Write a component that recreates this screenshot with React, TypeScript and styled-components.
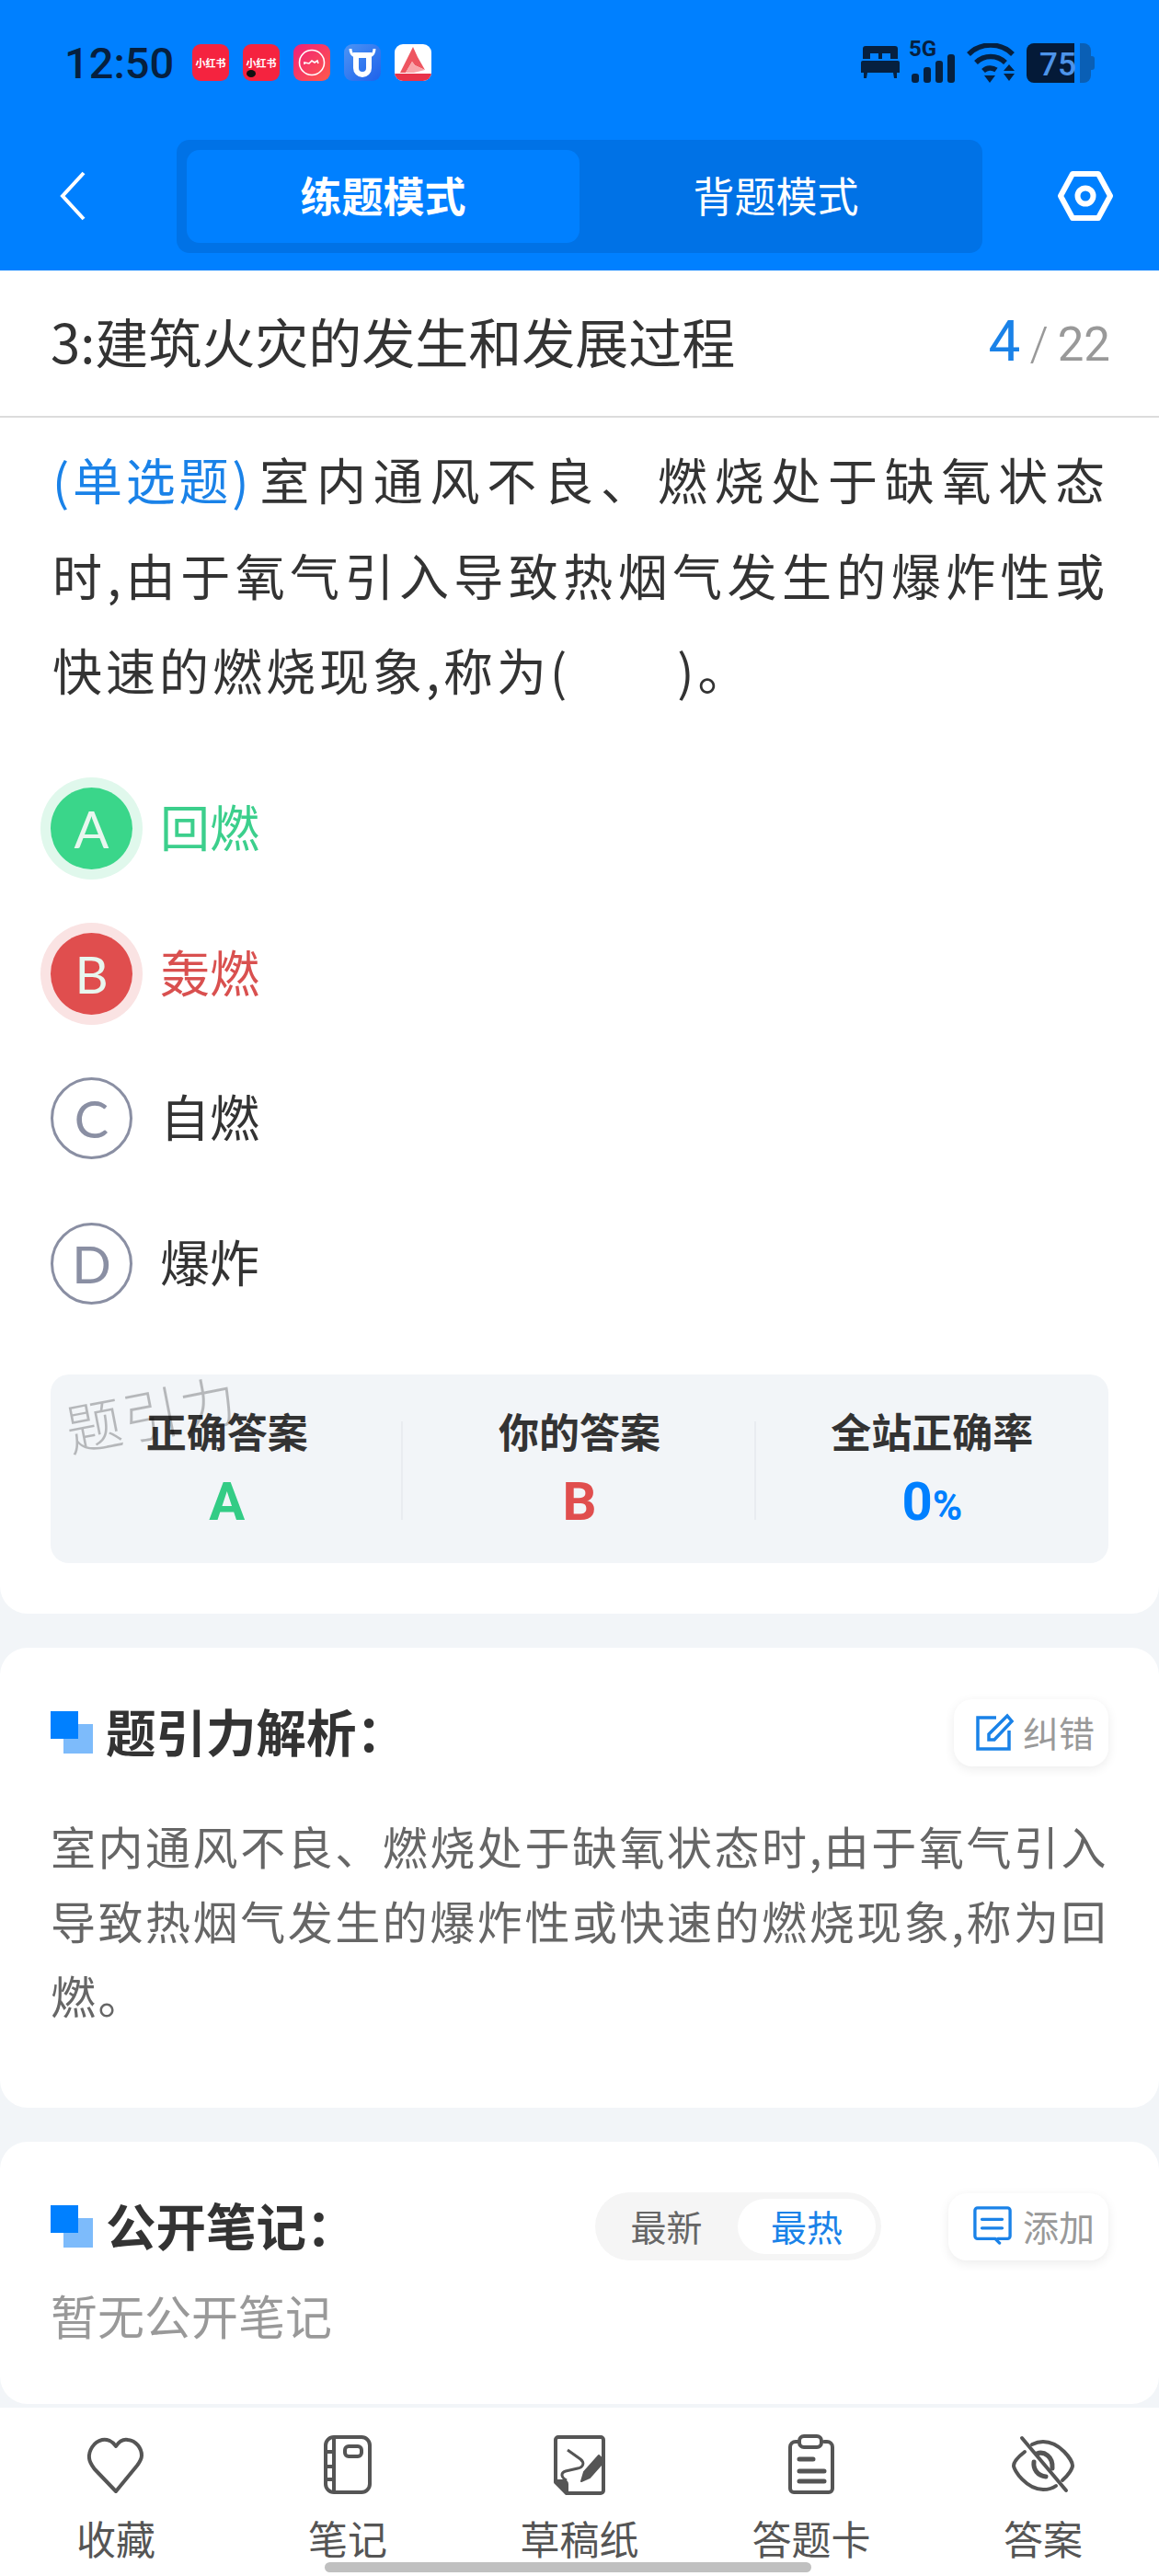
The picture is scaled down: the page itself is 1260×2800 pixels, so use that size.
import styled, { createGlobalStyle } from "styled-components";

const GlobalStyle = createGlobalStyle`
  html, body {
    margin: 0;
    padding: 0;
    background: #f2f5f8;
    font-family: "Noto Sans CJK SC", "Noto Sans", sans-serif;
  }
  * { box-sizing: border-box; }
`;

const Page = styled.div`
  position: relative;
  width: 1260px;
  height: 2800px;
  overflow: hidden;
  display: flex;
  flex-direction: column;
  background: #f2f5f8;
`;

const Header = styled.header`
  height: 294px;
  background: #0080ff;
`;

const StatusBar = styled.div`
  height: 136px;
  padding: 0 70px 0 70px;
  display: flex;
  align-items: center;
  color: #06203f;
`;

const Clock = styled.span`
  font-family: Roboto, sans-serif;
  font-size: 47px;
  font-weight: 500;
  width: 139px;
`;

const AppIcons = styled.div`
  display: flex;
  gap: 15px;
  flex: 1;
`;

const AppIcon = styled.div<{ $bg: string }>`
  width: 40px;
  height: 40px;
  border-radius: 9px;
  background: ${(p) => p.$bg};
  color: #fff;
  font-size: 11px;
  font-weight: 700;
  display: flex;
  align-items: center;
  justify-content: center;
  overflow: hidden;
  position: relative;
  white-space: nowrap;
`;

const AppDot = styled.i`
  position: absolute;
  left: 4px;
  bottom: 4px;
  width: 10px;
  height: 8px;
  border-radius: 50%;
  background: #111;
`;

const StatusIcons = styled.div`
  display: flex;
  align-items: center;
`;

const NavBar = styled.div`
  height: 154px;
  padding: 0 0 0 64px;
  display: flex;
  align-items: center;
`;

const TabSwitch = styled.div`
  margin-left: 98px;
  width: 876px;
  height: 123px;
  padding: 11px;
  border-radius: 14px;
  background: #0072e6;
  display: flex;
`;

const TabItem = styled.div<{ $active?: boolean }>`
  flex: 1;
  padding-bottom: 3px;
  display: flex;
  align-items: center;
  justify-content: center;
  border-radius: 14px;
  color: #fff;
  font-size: 45px;
  font-weight: ${(p) => (p.$active ? 700 : 400)};
  background: ${(p) => (p.$active ? "#0080ff" : "transparent")};
`;

const SettingsBtn = styled.div`
  margin-left: 82px;
  display: flex;
`;

const QuestionCard = styled.section`
  position: relative;
  height: 1460px;
  background: #fff;
  border-radius: 0 0 30px 30px;
`;

const TitleRow = styled.div`
  height: 160px;
  padding: 0 53px 6px 55px;
  border-bottom: 2px solid #dcdcdc;
  display: flex;
  align-items: center;
  justify-content: space-between;
`;

const ChapterTitle = styled.h1`
  margin: 0;
  font-size: 58px;
  font-weight: 400;
  color: #333;
`;

const Counter = styled.div`
  display: flex;
  align-items: baseline;
  color: #999;
  font-size: 51px;
  font-family: Roboto, sans-serif;
`;

const CounterNow = styled.span`
  font-size: 62px;
  color: #1a82e8;
`;

const CounterSep = styled.span`
  margin: 0 10px;
  font-weight: 300;
`;

const QuestionText = styled.p`
  margin: 0;
  padding: 15px 55px 0 57px;
  font-size: 54px;
  line-height: 103.5px;
  letter-spacing: 4px;
  text-align: justify;
  color: #333;
`;

const QuestionType = styled.span`
  margin-right: 8px;
  letter-spacing: 0;
  color: #1a82e8;
`;

const OptionList = styled.div`
  margin-top: 42px;
  padding-left: 55px;
`;

const OptionRow = styled.div`
  height: 157.7px;
  display: flex;
  align-items: center;
  gap: 30px;
`;

const optionBg = { right: "#3ad68a", wrong: "#e04e4e", none: "#fff" };
const optionRing = { right: "#e0f8ec", wrong: "#fae3e3", none: "transparent" };
const optionText = { right: "#3ccf8c", wrong: "#d9504f", none: "#333" };

type OptionState = "right" | "wrong" | "none";

const OptionBadge = styled.div<{ $state: OptionState }>`
  width: 89px;
  height: 89px;
  border-radius: 50%;
  display: flex;
  align-items: center;
  justify-content: center;
  font-family: Lato, sans-serif;
  font-size: 56px;
  font-weight: 400;
  background: ${(p) => optionBg[p.$state]};
  color: ${(p) => (p.$state === "none" ? "#8a8fa3" : "#e8f7ef")};
  border: ${(p) => (p.$state === "none" ? "3px solid #8a8fa3" : "none")};
  box-shadow: 0 0 0 11px ${(p) => optionRing[p.$state]};
`;

const OptionLabel = styled.span<{ $state: OptionState }>`
  padding-bottom: 6px;
  font-size: 54px;
  color: ${(p) => optionText[p.$state]};
`;

const StatsBox = styled.div`
  margin: 42px 55px 0;
  height: 205px;
  border-radius: 20px;
  background: #f2f5f8;
  display: grid;
  grid-template-columns: repeat(3, 1fr);
  align-items: center;
`;

const StatCell = styled.div<{ $divider?: boolean }>`
  position: relative;
  padding-bottom: 4px;
  text-align: center;
  &::after {
    content: "";
    display: ${(p) => (p.$divider ? "block" : "none")};
    position: absolute;
    right: 0;
    top: 20px;
    bottom: 16px;
    width: 2px;
    background: #e9ecf0;
  }
`;

const StatLabel = styled.div`
  font-size: 44px;
  font-weight: 700;
  line-height: 60px;
  color: #333;
`;

const StatValue = styled.div<{ $color: string }>`
  margin-top: 15px;
  height: 64px;
  font-family: Roboto, sans-serif;
  font-size: 58px;
  font-weight: 700;
  line-height: 64px;
  color: ${(p) => p.$color};
  small {
    font-size: 44px;
    line-height: 0;
  }
`;

const Watermark = styled.div`
  position: absolute;
  left: 70px;
  top: 1490px;
  font-size: 61px;
  font-weight: 300;
  letter-spacing: 2px;
  color: rgba(0, 0, 0, 0.25);
  transform: rotate(-11deg);
  pointer-events: none;
`;

const Card = styled.section<{ $top: number; $height: number }>`
  margin-top: ${(p) => p.$top}px;
  height: ${(p) => p.$height}px;
  padding: 55px 55px 0;
  background: #fff;
  border-radius: 30px;
`;

const CardHead = styled.div`
  height: 74px;
  display: flex;
  align-items: center;
  gap: 14px;
`;

const SquareMark = styled.div`
  position: relative;
  width: 46px;
  height: 46px;
  flex: none;
  &::before {
    content: "";
    position: absolute;
    right: 0;
    bottom: 0;
    width: 32px;
    height: 32px;
    background: #7dbbfb;
  }
  &::after {
    content: "";
    position: absolute;
    left: 0;
    top: 0;
    width: 30px;
    height: 30px;
    background: #0080ff;
  }
`;

const CardTitle = styled.h2`
  margin: 0;
  padding-bottom: 6px;
  flex: 1;
  font-size: 54.5px;
  font-weight: 700;
  color: #333;
  white-space: nowrap;
`;

const ActionBtn = styled.div<{ $wide?: boolean }>`
  height: 73px;
  padding: 0 15px 3px ${(p) => (p.$wide ? 27 : 24)}px;
  border-radius: 20px;
  background: #fff;
  box-shadow: 0 3px 12px rgba(0, 0, 0, 0.08);
  display: flex;
  align-items: center;
  gap: ${(p) => (p.$wide ? 12 : 9)}px;
  color: #999;
  font-size: 39px;
  flex: none;
`;

const SortSwitch = styled.div`
  width: 311px;
  height: 74px;
  margin-right: 59px;
  padding: 7px 6px 7px 0;
  border-radius: 37px;
  background: #f5f5f5;
  display: flex;
  flex: none;
`;

const SortItem = styled.div<{ $active?: boolean }>`
  flex: ${(p) => (p.$active ? "0 0 150px" : "1")};
  padding-bottom: 2px;
  border-radius: 30px;
  display: flex;
  align-items: center;
  justify-content: center;
  font-size: 39px;
  background: ${(p) => (p.$active ? "#fff" : "transparent")};
  color: ${(p) => (p.$active ? "#1a82e8" : "#666")};
`;

const Analysis = styled.p`
  margin: 45px 0 0;
  font-size: 49px;
  line-height: 81px;
  letter-spacing: 2.5px;
  text-align: justify;
  color: #666;
`;

const EmptyNote = styled.p`
  margin: 24px 0 0;
  font-size: 51px;
  line-height: 70px;
  color: #999;
`;

const TabBar = styled.nav`
  margin-top: 4px;
  flex: 1;
  background: #fff;
  padding-top: 28px;
  display: grid;
  grid-template-columns: repeat(5, 1fr);
  align-items: start;
`;

const BarItem = styled.div`
  display: flex;
  flex-direction: column;
  align-items: center;
  gap: 15px;
  color: #555;
  font-size: 43px;
  line-height: 60px;
`;

const HomeIndicator = styled.div`
  position: absolute;
  left: 353px;
  bottom: 4px;
  width: 529px;
  height: 11px;
  border-radius: 6px;
  background: #c0c0c0;
`;

const BedIcon = () => (
  <svg width="42" height="36" viewBox="0 0 42 36" fill="#06203f">
    <path d="M5 0h32a3 3 0 0 1 3 3v11h-8V8H23v6h-4V8H10v6H2V3a3 3 0 0 1 3-3z" />
    <path d="M2 16h38a2 2 0 0 1 2 2v11h-3v6h-3l-1-6H7l-1 6H3v-6H0V18a2 2 0 0 1 2-2z" />
  </svg>
);

const SignalIcon = () => (
  <svg width="54" height="52" viewBox="-4 -8 54 52" fill="#06203f" style={{ marginTop: -8 }}>
    <text x="0" y="15" fontSize="24" fontWeight="700" fontFamily="Roboto, sans-serif">5G</text>
    <rect x="3" y="34" width="8" height="10" rx="3" />
    <rect x="16" y="27" width="8" height="17" rx="3" />
    <rect x="29" y="20" width="8" height="24" rx="3" />
    <rect x="42" y="13" width="8" height="31" rx="3" />
  </svg>
);

const WifiIcon = () => (
  <svg width="52" height="43" viewBox="0 0 52 43" fill="none" style={{ marginLeft: 13 }}>
    <path d="M2 12a34 34 0 0 1 48 0" stroke="#06203f" strokeWidth="5.5" />
    <path d="M10 21a23 23 0 0 1 32 0" stroke="#06203f" strokeWidth="5.5" />
    <path d="M18 30a11 11 0 0 1 14-1" stroke="#06203f" strokeWidth="5.5" />
    <path d="M19 35h12l-6 8z" fill="#06203f" />
    <path d="M40 30l6-7 6 7zM40 33h12l-6 8z" fill="#06203f" />
  </svg>
);

const BatteryIcon = () => (
  <svg width="74" height="43" viewBox="0 0 74 43" style={{ marginLeft: 13 }}>
    <path d="M62 0h-4v43h4a8 8 0 0 0 8-8V8a8 8 0 0 0-8-8z" fill="#0a5fb5" />
    <path d="M70 14h1a3 3 0 0 1 3 3v9a3 3 0 0 1-3 3h-1z" fill="#0a5fb5" />
    <path d="M8 0h44v43H8a8 8 0 0 1-8-8V8a8 8 0 0 1 8-8z" fill="#041a38" />
    <text x="14" y="35" fontSize="35" fontWeight="500" fontFamily="Roboto, sans-serif" fill="#4d94ea">75</text>
  </svg>
);

const BackIcon = () => (
  <svg width="30" height="56" viewBox="0 0 30 56" fill="none">
    <path d="M27 3L4 28l23 25" stroke="#fff" strokeWidth="4" />
  </svg>
);

const SettingsIcon = () => (
  <svg width="60" height="56" viewBox="0 0 60 56" fill="none" stroke="#fff">
    <path d="M16 4h28l13 24-13 24H16L3 28z" strokeWidth="6" strokeLinejoin="round" />
    <circle cx="30" cy="28" r="8.5" strokeWidth="6" />
  </svg>
);

const EditIcon = () => (
  <svg width="42" height="42" viewBox="0 0 42 42" fill="none" stroke="#1a82e8" strokeWidth="3.5">
    <path d="M22 6H2v34h34V20" />
    <path d="M14 24l0 6 6 0L39 10l-5-6z" />
  </svg>
);

const CommentIcon = () => (
  <svg width="42" height="42" viewBox="0 0 44 44" fill="none" stroke="#1a82e8" strokeWidth="3.5">
    <path d="M28 37h11a3 3 0 0 0 3-3V5a3 3 0 0 0-3-3H5a3 3 0 0 0-3 3v29a3 3 0 0 0 3 3h20l5 5" strokeLinecap="round" />
    <path d="M10 15h23M10 25h23" strokeLinecap="round" />
  </svg>
);

const HeartIcon = () => (
  <svg width="68" height="68" viewBox="0 0 68 68" fill="none" stroke="#555" strokeWidth="4" strokeLinejoin="round">
    <path d="M34 14C30 8 24 6 19 7 10 9 4 19 5 27c.5 5 3 8 6 12l23 24 23-28c3-4 5-7 5-11 0-8-6-16-15-17-5-1-9 1-13 7z" />
  </svg>
);

const NotebookIcon = () => (
  <svg width="68" height="68" viewBox="0 0 68 68" fill="none" stroke="#555" strokeWidth="4">
    <rect x="10" y="4" width="48" height="60" rx="9" />
    <path d="M19 4v60M10 20h9M10 36h9M10 50h9" />
    <rect x="31" y="14" width="18" height="11" rx="4" />
  </svg>
);

const DraftIcon = () => (
  <svg width="68" height="68" viewBox="0 0 68 68" fill="none" stroke="#555" strokeWidth="4" strokeLinejoin="round">
    <path d="M20 65h37a3 3 0 0 0 3-3V7a3 3 0 0 0-3-3H11a3 3 0 0 0-3 3v46z" />
    <path d="M8 52h9a3 3 0 0 1 3 3v10z" fill="#555" />
    <path d="M21 18l14 10c5 4 3 9-3 10l-13 3c-6 2-5 7 1 10" strokeWidth="3" />
    <path d="M36 52l3-10 16-18 6 6-16 18z" fill="#555" strokeWidth="2" />
  </svg>
);

const ClipboardIcon = () => (
  <svg width="68" height="68" viewBox="0 0 68 68" fill="none" stroke="#555" strokeWidth="4" strokeLinecap="round">
    <path d="M20 9h-3a6 6 0 0 0-6 6v45a4 4 0 0 0 4 4h38a4 4 0 0 0 4-4V15a6 6 0 0 0-6-6h-3" />
    <rect x="21" y="3" width="24" height="12" rx="5" />
    <path d="M24 28h15M24 41h27M24 52h27" strokeWidth="5" transform="translate(-3 0)" />
  </svg>
);

const EyeOffIcon = () => (
  <svg width="68" height="68" viewBox="0 0 68 68" fill="none" stroke="#555" strokeWidth="4" strokeLinecap="round">
    <path d="M14 20C5 27 2 32 2 35c0 5 14 26 32 26 6 0 10-1 14-4" />
    <path d="M22 12c4-2 8-3 12-3 18 0 32 20 32 26 0 3-4 10-11 16" />
    <path d="M27 22c8-3 18 3 17 16M24 31c-1 8 4 15 13 16" strokeWidth="5" />
    <path d="M11 5l48 57" />
  </svg>
);

const options: { key: string; text: string; state: OptionState }[] = [
  { key: "A", text: "回燃", state: "right" },
  { key: "B", text: "轰燃", state: "wrong" },
  { key: "C", text: "自燃", state: "none" },
  { key: "D", text: "爆炸", state: "none" },
];

const barItems = [
  { label: "收藏", icon: <HeartIcon /> },
  { label: "笔记", icon: <NotebookIcon /> },
  { label: "草稿纸", icon: <DraftIcon /> },
  { label: "答题卡", icon: <ClipboardIcon /> },
  { label: "答案", icon: <EyeOffIcon /> },
];

function App() {
  return (
    <Page>
      <GlobalStyle />
      <Header>
        <StatusBar>
          <Clock>12:50</Clock>
          <AppIcons>
            <AppIcon $bg="#f5233f">小红书</AppIcon>
            <AppIcon $bg="#f5233f">
              小红书
              <AppDot />
            </AppIcon>
            <AppIcon $bg="linear-gradient(135deg, #f0207a, #ff5a4a)">
              <svg width="30" height="30" viewBox="0 0 30 30" fill="none" stroke="#fff" strokeWidth="1.6">
                <circle cx="15" cy="15" r="13.5" />
                <path d="M7 17v-2l5 1 3-3 3 2 3-2 1 3" />
              </svg>
            </AppIcon>
            <AppIcon $bg="linear-gradient(135deg, #4c94f5, #1f62ea)">
              <svg width="30" height="32" viewBox="0 0 30 32" fill="none" stroke="#fff">
                <path d="M8 11v11a7 7 0 0 0 14 0V11" strokeWidth="6" />
                <path d="M5 8h20" strokeWidth="6" />
                <path d="M2 1c0 5 2 7 5 8M28 1c0 5-2 7-5 8" strokeWidth="3" />
              </svg>
            </AppIcon>
            <AppIcon $bg="#fff">
              <svg width="40" height="40" viewBox="0 0 40 40">
                <path d="M20 3L6 31h6l7-12 3 4 11 5L25 14z" fill="#ee5560" />
                <path d="M19 19l3 4 11 5-12 3h-9z" fill="#f9a5aa" />
                <rect x="0" y="32" width="40" height="8" fill="#e8344a" />
              </svg>
            </AppIcon>
          </AppIcons>
          <StatusIcons>
            <BedIcon />
            <span style={{ width: 6 }} />
            <SignalIcon />
            <WifiIcon />
            <BatteryIcon />
          </StatusIcons>
        </StatusBar>
        <NavBar>
          <BackIcon />
          <TabSwitch>
            <TabItem $active>练题模式</TabItem>
            <TabItem>背题模式</TabItem>
          </TabSwitch>
          <SettingsBtn>
            <SettingsIcon />
          </SettingsBtn>
        </NavBar>
      </Header>

      <QuestionCard>
        <TitleRow>
          <ChapterTitle>3:建筑火灾的发生和发展过程</ChapterTitle>
          <Counter>
            <CounterNow>4</CounterNow>
            <CounterSep>/</CounterSep>
            22
          </Counter>
        </TitleRow>
        <QuestionText>
          <QuestionType>(单选题)</QuestionType>室内通风不良、燃烧处于缺氧状态时,由于氧气引入导致热烟气发生的爆炸性或快速的燃烧现象,称为(　　)。
        </QuestionText>
        <OptionList>
          {options.map((o) => (
            <OptionRow key={o.key}>
              <OptionBadge $state={o.state}>{o.key}</OptionBadge>
              <OptionLabel $state={o.state}>{o.text}</OptionLabel>
            </OptionRow>
          ))}
        </OptionList>
        <StatsBox>
          <StatCell $divider>
            <StatLabel>正确答案</StatLabel>
            <StatValue $color="#33cc85">A</StatValue>
          </StatCell>
          <StatCell $divider>
            <StatLabel>你的答案</StatLabel>
            <StatValue $color="#e04e4e">B</StatValue>
          </StatCell>
          <StatCell>
            <StatLabel>全站正确率</StatLabel>
            <StatValue $color="#0080ff">
              0<small>%</small>
            </StatValue>
          </StatCell>
        </StatsBox>
      </QuestionCard>

      <Card $top={37} $height={500}>
        <CardHead>
          <SquareMark />
          <CardTitle>题引力解析：</CardTitle>
          <ActionBtn>
            <EditIcon />
            纠错
          </ActionBtn>
        </CardHead>
        <Analysis>室内通风不良、燃烧处于缺氧状态时,由于氧气引入导致热烟气发生的爆炸性或快速的燃烧现象,称为回燃。</Analysis>
      </Card>

      <Card $top={37} $height={285}>
        <CardHead>
          <SquareMark />
          <CardTitle>公开笔记：</CardTitle>
          <SortSwitch>
            <SortItem>最新</SortItem>
            <SortItem $active>最热</SortItem>
          </SortSwitch>
          <ActionBtn $wide>
            <CommentIcon />
            添加
          </ActionBtn>
        </CardHead>
        <EmptyNote>暂无公开笔记</EmptyNote>
      </Card>

      <TabBar>
        {barItems.map((item) => (
          <BarItem key={item.label}>
            {item.icon}
            {item.label}
          </BarItem>
        ))}
      </TabBar>

      <Watermark>题引力</Watermark>
      <HomeIndicator />
    </Page>
  );
}

export default App;
